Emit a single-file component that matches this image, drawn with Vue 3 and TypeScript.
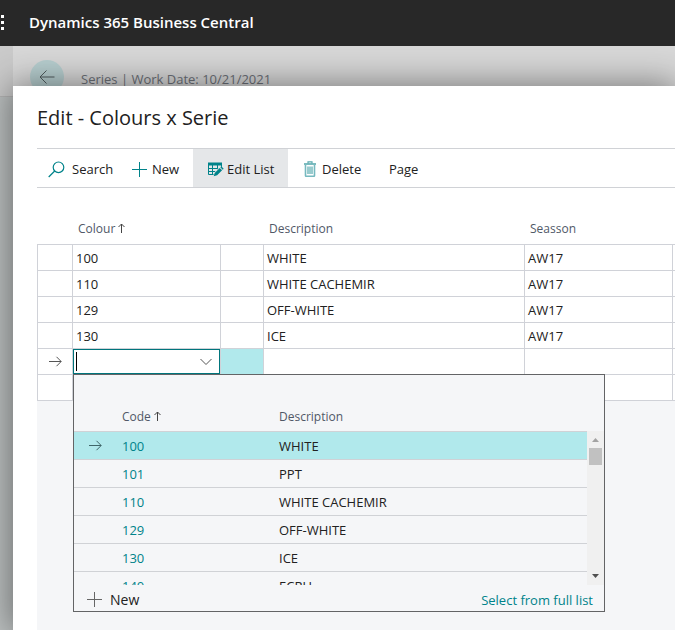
<script setup lang="ts">
import { ref } from 'vue'

interface ColourRow {
  code: string
  description: string
  season: string
}

interface LookupRow {
  code: string
  description: string
}

const rows: ColourRow[] = [
  { code: '100', description: 'WHITE', season: 'AW17' },
  { code: '110', description: 'WHITE CACHEMIR', season: 'AW17' },
  { code: '129', description: 'OFF-WHITE', season: 'AW17' },
  { code: '130', description: 'ICE', season: 'AW17' },
]

const lookup: LookupRow[] = [
  { code: '100', description: 'WHITE' },
  { code: '101', description: 'PPT' },
  { code: '110', description: 'WHITE CACHEMIR' },
  { code: '129', description: 'OFF-WHITE' },
  { code: '130', description: 'ICE' },
  { code: '140', description: 'ECRU' },
]

const newColour = ref('')
const selected = ref('100')

function choose(code: string) {
  selected.value = code
  newColour.value = code
}
</script>

<template>
  <div class="shell">
    <header class="topbar">
      <svg class="waffle" width="5" height="16" viewBox="0 0 5 16" aria-hidden="true">
        <path d="M1 1h3v3H1zM1 7h3v3H1zM1 13h3v3H1z" fill="#fff" />
      </svg>
      <span class="product">Dynamics 365 Business Central</span>
    </header>

    <div class="workspace">
      <div class="rail"><div class="rail-top"></div></div>
      <div class="page">
        <div class="page-head">
          <button class="back" type="button" aria-label="Back">
            <svg width="16" height="14" viewBox="0 0 16 14" fill="none" stroke="#505c5e">
              <path d="M15.500 7H1M7.500 .5L1 7l6.500 6.500" />
            </svg>
          </button>
          <span class="crumb">Series | Work Date: 10/21/2021</span>
        </div>

        <main class="dialog">
          <h1>Edit - Colours x Serie</h1>

          <div class="toolbar">
            <button type="button" class="search">
              <svg width="17" height="17" viewBox="0 0 17 17" fill="none" stroke="#00838a" stroke-width="1.200">
                <circle cx="10.500" cy="6.300" r="5.300" />
                <path d="M6.700 10L.7 16" />
              </svg>
              Search
            </button>
            <button type="button" class="new">
              <svg width="15" height="15" viewBox="0 0 15 15" fill="none" stroke="#00838a">
                <path d="M7.500 0v15M0 7.500h15" />
              </svg>
              New
            </button>
            <button type="button" class="edit">
              <svg width="16" height="15" viewBox="0 0 16 15">
                <path d="M0 .5h14v3H0z" fill="#00838a" />
                <path d="M.5 3v9.500h6M13.500 3v2M.5 6.500h11M.5 9.500h8M4.500 3v9.500M9.500 3v6" fill="none" stroke="#00838a" />
                <path d="M5 14.800l1-4L12.500 4l3 2.800-6.700 6.700z" fill="#e5e7e9" />
                <path d="M5.700 14.300l1-3.300 5-5 2.400 2.300-5 5zM12.300 5.300l1-1 2.400 2.400-1 1z" fill="#00838a" />
              </svg>
              Edit List
            </button>
            <button type="button" class="delete">
              <svg width="12" height="16" viewBox="0 0 12 16" fill="none">
                <path d="M1.500 4v10.500q0 .8.8.8h7.400q.8 0 .8-.8V4" stroke="#76b9bf" stroke-width="1.600" />
                <path d="M0 3h12" stroke="#5aaab0" stroke-width="1.600" />
                <path d="M4 2.500V.8h4v1.700" stroke="#5aaab0" stroke-width="1.200" />
                <path d="M4 5.500v7.500M6 5.500v7.500M8 5.500v7.500" stroke="#33979d" />
              </svg>
              Delete
            </button>
            <button type="button" class="more">Page</button>
          </div>

          <div class="grid-area">
            <table class="grid">
              <colgroup>
                <col class="c-mark" />
                <col class="c-colour" />
                <col class="c-menu" />
                <col class="c-desc" />
                <col class="c-season" />
                <col />
              </colgroup>
              <thead>
                <tr>
                  <th></th>
                  <th>
                    Colour
                    <svg class="sort" width="7" height="10" viewBox="0 0 7 10" fill="none" stroke="#444">
                      <path d="M3.500 10V1M.5 4l3-3 3 3" />
                    </svg>
                  </th>
                  <th></th>
                  <th>Description</th>
                  <th>Seasson</th>
                  <th></th>
                </tr>
              </thead>
              <tbody>
                <tr v-for="row in rows" :key="row.code">
                  <td></td>
                  <td>{{ row.code }}</td>
                  <td></td>
                  <td>{{ row.description }}</td>
                  <td>{{ row.season }}</td>
                  <td></td>
                </tr>
                <tr>
                  <td class="mark">
                    <svg width="13" height="11" viewBox="0 0 13 11" fill="none" stroke="#555">
                      <path d="M0 5.500h12M7.500 .8l4.700 4.700-4.700 4.700" />
                    </svg>
                  </td>
                  <td class="editing">
                    <div class="combo">
                      <input v-model="newColour" type="text" role="combobox" aria-expanded="true" aria-label="Colour" />
                      <i v-if="!newColour" class="caret"></i>
                      <button type="button" class="chevron" aria-label="Choose a colour">
                        <svg width="12" height="8" viewBox="0 0 12 8" fill="none" stroke="#555">
                          <path d="M.5 1L6 6.500 11.500 1" />
                        </svg>
                      </button>

                      <div class="popup">
                        <div class="popup-head">
                          <span></span>
                          <span>
                            Code
                            <svg class="sort" width="7" height="10" viewBox="0 0 7 10" fill="none" stroke="#444">
                              <path d="M3.500 10V1M.5 4l3-3 3 3" />
                            </svg>
                          </span>
                          <span>Description</span>
                        </div>
                        <div class="popup-body">
                          <div class="options" role="listbox" aria-label="Colours">
                            <div
                              v-for="item in lookup"
                              :key="item.code"
                              class="option"
                              :class="{ active: item.code === selected }"
                              role="option"
                              :aria-selected="item.code === selected"
                              @click="choose(item.code)"
                            >
                              <span class="pointer">
                                <svg v-if="item.code === selected" width="13" height="11" viewBox="0 0 13 11" fill="none" stroke="#3f6669">
                                  <path d="M0 5.500h12M7.500 .8l4.700 4.700-4.700 4.700" />
                                </svg>
                              </span>
                              <a href="#" @click.prevent>{{ item.code }}</a>
                              <span>{{ item.description }}</span>
                            </div>
                          </div>
                          <div class="track" aria-hidden="true">
                            <svg width="7" height="4" viewBox="0 0 7 4"><path d="M0 4L3.500 0 7 4z" fill="#a3a3a3" /></svg>
                            <div class="thumb"></div>
                            <svg class="down" width="7" height="4" viewBox="0 0 7 4"><path d="M0 0l3.500 4L7 0z" fill="#505050" /></svg>
                          </div>
                        </div>
                        <div class="popup-foot">
                          <button type="button">
                            <svg width="15" height="15" viewBox="0 0 15 15" fill="none" stroke="#666">
                              <path d="M7.500 0v15M0 7.500h15" />
                            </svg>
                            New
                          </button>
                          <a href="#" @click.prevent>Select from full list</a>
                        </div>
                      </div>
                    </div>
                  </td>
                  <td class="current"></td>
                  <td></td>
                  <td></td>
                  <td></td>
                </tr>
                <tr>
                  <td v-for="n in 6" :key="n"></td>
                </tr>
              </tbody>
            </table>
          </div>
        </main>
      </div>
    </div>
  </div>
</template>

<style>
body {
  overflow: hidden;
}
</style>

<style scoped>
.shell {
  display: flex;
  flex-direction: column;
  min-height: 100vh;
  font-family: "Open Sans", "Noto Sans", sans-serif;
  font-size: 13px;
  color: #212121;
}
.shell * {
  box-sizing: border-box;
}
svg {
  flex: none;
}
button {
  border: 0;
  padding: 0;
  background: none;
  font: inherit;
  color: inherit;
}
a {
  color: #00838a;
  text-decoration: none;
}
.topbar {
  display: flex;
  align-items: center;
  gap: 24px;
  height: 46px;
  padding-bottom: 2px;
  background: #282828;
  color: #fff;
  font-size: 15px;
  font-weight: 600;
  z-index: 1;
}
.workspace {
  display: flex;
  flex: 1;
}
.rail {
  width: 13px;
  background: #bcc0c0;
}
.rail-top {
  height: 51px;
  background: #cacaca;
  border-bottom: 1px solid #b4b4b4;
}
.page {
  display: flex;
  flex: 1;
  flex-direction: column;
  min-width: 0;
  background: #d7d7d7;
}
.page-head {
  display: flex;
  align-items: flex-start;
  gap: 17px;
  height: 40px;
  padding: 14px 17px 0;
}
.back {
  display: flex;
  align-items: center;
  justify-content: center;
  flex: none;
  width: 34px;
  height: 34px;
  border-radius: 50%;
  background: #b7cecf;
}
.crumb {
  padding-top: 9px;
  line-height: 20px;
  color: #6c7078;
}
.dialog {
  position: relative;
  display: flex;
  flex: 1;
  flex-direction: column;
  padding-left: 24px;
  background: #fff;
  box-shadow: 0 0 32px 2px rgba(0, 0, 0, 0.45);
}
h1 {
  margin: 0;
  padding: 18px 0 16px;
  font-size: 20px;
  line-height: 28px;
  font-weight: 500;
}
.toolbar {
  display: flex;
  height: 40px;
  border-top: 1px solid #d0d2d6;
  border-bottom: 1px solid #d0d2d6;
}
.toolbar button {
  display: flex;
  align-items: center;
  gap: 7px;
  padding-top: 2px;
  white-space: nowrap;
}
.toolbar .search {
  width: 95px;
  padding-left: 11px;
}
.toolbar .new {
  width: 61px;
  gap: 5px;
}
.toolbar .edit {
  width: 95px;
  gap: 3px;
  padding-left: 15px;
  background: #e5e7e9;
}
.toolbar .delete {
  width: 101px;
  gap: 6px;
  padding-left: 16px;
}
.grid-area {
  flex: 1;
  background: #f5f6f8;
}
.grid {
  width: 100%;
  table-layout: fixed;
  border-spacing: 0;
  background: #fff;
}
.c-mark {
  width: 35px;
}
.c-colour,
.c-season {
  width: 148px;
}
.c-menu {
  width: 43px;
}
.c-desc {
  width: 261px;
}
.grid th {
  height: 56px;
  padding: 24px 0 0 6px;
  font-size: 12px;
  font-weight: 400;
  text-align: left;
  color: #505867;
}
.grid td {
  height: 26px;
  padding: 0 0 0 3px;
  border-top: 1px solid #d0d2d8;
  border-left: 1px solid #d0d2d8;
  line-height: 20px;
}
.grid tr:last-child td {
  height: 27px;
  border-bottom: 1px solid #d0d2d8;
}
.grid td.mark {
  padding: 0;
  text-align: center;
}
.mark svg {
  display: block;
  margin: 0 auto;
}
.grid td.editing {
  padding: 0;
}
.grid td.current {
  background: #b1e9ec;
}
.combo {
  position: relative;
  display: flex;
  height: 25px;
  border: 1px solid #00757c;
}
.combo input {
  flex: 1;
  min-width: 0;
  padding: 0 2px;
  border: 0;
  outline: 0;
  background: none;
  font: inherit;
}
.caret {
  position: absolute;
  left: 2px;
  top: 2px;
  width: 1px;
  height: 19px;
  background: #000;
}
.chevron {
  display: flex;
  align-items: center;
  justify-content: center;
  width: 26px;
}
.popup {
  position: absolute;
  top: 24px;
  left: -1px;
  z-index: 2;
  width: 532px;
  border: 1px solid #636466;
  background: #f5f6f8;
}
.popup-head {
  display: grid;
  grid-template-columns: 48px 157px 1fr;
  height: 56px;
  padding-top: 32px;
  font-size: 12px;
  color: #505867;
}
.popup-body {
  display: flex;
  height: 154px;
  overflow: hidden;
}
.options {
  flex: 1;
}
.option {
  display: grid;
  grid-template-columns: 48px 157px 1fr;
  align-items: center;
  height: 28px;
  border-top: 1px solid #d0d2d6;
}
.option.active {
  background: #b1e9ec;
}
.pointer {
  display: flex;
  padding-left: 15px;
}
.track {
  display: flex;
  flex-direction: column;
  align-items: center;
  gap: 6px;
  width: 17px;
  padding: 7px 0;
  background: #f0f0f0;
}
.thumb {
  width: 13px;
  height: 17px;
  background: #c1c1c1;
}
.down {
  margin-top: auto;
}
.popup-foot {
  display: flex;
  align-items: center;
  justify-content: space-between;
  height: 26px;
  padding: 3px 11px 0 13px;
  font-size: 14px;
}
.popup-foot button {
  display: flex;
  align-items: center;
  gap: 8px;
}
.popup-foot a {
  font-size: 13px;
}
</style>
